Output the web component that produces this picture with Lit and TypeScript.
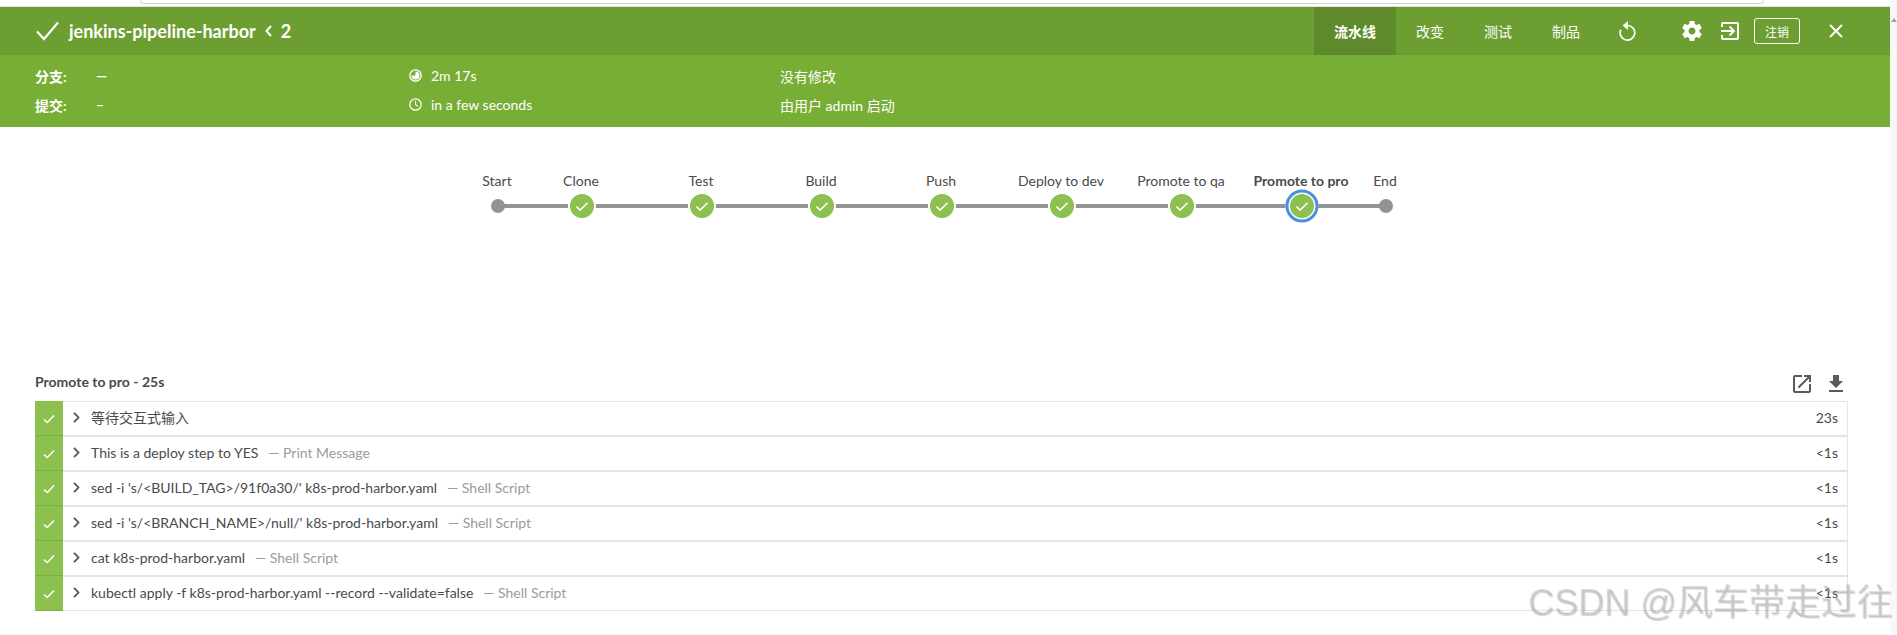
import { LitElement, html, css, svg } from "lit";
import { customElement } from "lit/decorators.js";

const NODES = [
  { x: 28, label: "Start", kind: "end" },
  { x: 112, label: "Clone", kind: "ok" },
  { x: 232, label: "Test", kind: "ok" },
  { x: 352, label: "Build", kind: "ok" },
  { x: 472, label: "Push", kind: "ok" },
  { x: 592, label: "Deploy to dev", kind: "ok" },
  { x: 712, label: "Promote to qa", kind: "ok" },
  { x: 832, label: "Promote to pro", kind: "sel" },
  { x: 916, label: "End", kind: "end" },
];

const ROWS = [
  { t: "等待交互式输入", d: "", time: "23s" },
  { t: "This is a deploy step to YES", d: "— Print Message", time: "<1s" },
  { t: "sed -i 's/<BUILD_TAG>/91f0a30/' k8s-prod-harbor.yaml", d: "— Shell Script", time: "<1s" },
  { t: "sed -i 's/<BRANCH_NAME>/null/' k8s-prod-harbor.yaml", d: "— Shell Script", time: "<1s" },
  { t: "cat k8s-prod-harbor.yaml", d: "— Shell Script", time: "<1s" },
  { t: "kubectl apply -f k8s-prod-harbor.yaml --record --validate=false", d: "— Shell Script", time: "<1s" },
];

@customElement("app-root")
export class AppRoot extends LitElement {
  static styles = css`
    :host {
      display: block;
      position: relative;
      height: 635px;
      overflow: hidden;
      background: #fff;
      font-family: Lato, "Noto Sans CJK SC", sans-serif;
      font-size: 14px;
      color: #4a4a4a;
    }
    .page { display: flex; height: 635px; }
    .main { width: 1890px; flex: none; }
    .rail {
      width: 7px;
      flex: none;
      background: #f8f8f8;
      display: flex;
      justify-content: center;
      padding-top: 18px;
      box-sizing: border-box;
    }
    .arrow {
      width: 0; height: 0;
      border-left: 3px solid transparent;
      border-right: 3px solid transparent;
      border-bottom: 4px solid #a0a0a0;
    }
    .strip { height: 7px; background: #fff; box-sizing: border-box; box-shadow: inset 0 -1px 0 #e4e4e4; }
    .strip div {
      height: 3px;
      margin: 0 126px 0 140px;
      border: 1px solid #cfcfcf;
      border-top: 0;
      border-radius: 0 0 6px 6px;
    }
    .head {
      height: 48px;
      background: #6d9e31;
      color: #fff;
      display: flex;
      align-items: center;
      padding-left: 36px;
    }
    .title { font-size: 18px; font-weight: 700; margin-left: 10px; }
    .run { display: flex; align-items: center; margin-left: 9px; font-size: 18px; font-weight: 700; gap: 9px; }
    .tabs { display: flex; align-self: stretch; margin-left: auto; }
    .tab { padding: 0 20px; display: flex; align-items: center; font-size: 14px; }
    .tab.on { background: #5f8a2c; font-weight: 700; }
    .reload { margin-left: 19px; }
    .gear { margin-left: 44px; margin-right: -2px; }
    .exit { margin-left: 19px; }
    .logout {
      margin-left: 15px;
      width: 46px;
      height: 26px;
      box-sizing: border-box;
      border: 1px solid #fff;
      border-radius: 3px;
      font-size: 12px;
      display: flex;
      align-items: center;
      justify-content: center;
    }
    .close { margin-left: 29px; margin-right: 47px; }
    .head svg { display: block; flex: none; }
    .meta {
      height: 72px;
      box-sizing: border-box;
      background: #78ae36;
      color: #fff;
      padding: 6px 0 0 35px;
      display: grid;
      grid-template-columns: 62px 312px 371px 1fr;
      grid-auto-rows: 29px;
      align-items: center;
      font-size: 14px;
    }
    .meta b { font-weight: 700; }
    .meta .dash { font-weight: 700; margin-left: -1px; }
    .cell { display: flex; align-items: center; gap: 9px; }
    .graph { display: block; margin: 40px 0 0 470px; }
    .graph text {
      font-family: Lato, "Noto Sans CJK SC", sans-serif;
      font-size: 14px;
      fill: #4a4a4a;
      text-anchor: middle;
    }
    .graph text.sel { font-weight: 700; }
    .details { margin-top: 145px; padding: 0 42px 0 35px; }
    .dhead {
      height: 29px;
      display: flex;
      align-items: flex-start;
      justify-content: space-between;
    }
    .dhead b { font-size: 14px; font-weight: 700; line-height: 20px; }
    .tools { display: flex; gap: 10px; }
    .tools svg { display: block; }
    .rowline {
      display: flex;
      align-items: center;
      height: 35px;
      box-sizing: border-box;
      border: 1px solid #e4e4e4;
      border-left: 0;
      padding-bottom: 3px;
    }
    .bar {
      width: 28px;
      height: 35px;
      margin: -1px 0 -4px;
      flex: none;
      background: #8cc04f;
      box-shadow: inset 0 -1px 0 #7fb03f;
      display: flex;
      align-items: center;
      justify-content: center;
    }
    .chev { margin-left: 10px; flex: none; display: block; }
    .label { margin-left: 11px; white-space: pre; }
    .desc { margin-left: 10px; color: #9b9b9b; white-space: pre; }
    .time { margin-left: auto; margin-right: 9px; }
    .mark {
      position: absolute;
      left: 1528px;
      top: 580px;
      font-family: "Liberation Sans", "Noto Sans CJK SC", sans-serif;
      font-size: 36px;
      line-height: 46px;
      white-space: pre;
      color: rgba(170, 170, 170, 0.36);
      text-shadow: 1px 1px 1px rgba(120, 120, 120, 0.3);
    }
  `;

  private node(n: { x: number; label: string; kind: string }) {
    const y = 39;
    const text = svg`<text class=${n.kind === "sel" ? "sel" : ""} x=${n.x - 1} y="19">${n.label}</text>`;
    if (n.kind === "end") {
      return svg`${text}<circle cx=${n.x} cy=${y} r="7" fill="#949393"></circle>`;
    }
    const ring =
      n.kind === "sel"
        ? svg`<circle cx=${n.x} cy=${y} r="16.5" fill="#fff"></circle><circle cx=${n.x} cy=${y} r="15" fill="none" stroke="#4a90e2" stroke-width="3"></circle>`
        : svg`<circle cx=${n.x} cy=${y} r="14" fill="#fff"></circle>`;
    return svg`${text}${ring}<circle cx=${n.x} cy=${y} r="12" fill="#8cc04f"></circle>
      <path d="M${n.x - 5.5} ${y + 0.5}l3.6 3.6 7.4-7.4" fill="none" stroke="#fff" stroke-width="1.5"></path>`;
  }

  render() {
    return html`
      <div class="page">
        <div class="main">
          <div class="strip"><div></div></div>
          <div class="head">
            <svg width="23" height="20" viewBox="0 0 23 20">
              <path d="M1 10.5l7 7.5L22 1.5" fill="none" stroke="#fff" stroke-width="2.2"></path>
            </svg>
            <span class="title">jenkins-pipeline-harbor</span>
            <span class="run">
              <svg width="7" height="12" viewBox="0 0 7 12"><path d="M6 1L1.5 6 6 11" fill="none" stroke="#fff" stroke-width="2"></path></svg>
              <span>2</span>
            </span>
            <div class="tabs">
              <div class="tab on">流水线</div>
              <div class="tab">改变</div>
              <div class="tab">测试</div>
              <div class="tab">制品</div>
            </div>
            <svg class="reload" width="17" height="20" viewBox="0 0 17 20">
              <path d="M8.5 4.5a7.3 7.3 0 1 1-6.6 4.1" fill="none" stroke="#fff" stroke-width="1.7"></path>
              <path d="M9 0L3.6 4.5 9 9z" fill="#fff"></path>
            </svg>
            <svg class="gear" width="24" height="24" viewBox="0 0 24 24">
              <path fill="#fff" d="M19.43 12.98c.04-.32.07-.64.07-.98s-.03-.66-.07-.98l2.11-1.65c.19-.15.24-.42.12-.64l-2-3.46c-.12-.22-.39-.3-.61-.22l-2.49 1c-.52-.4-1.08-.73-1.69-.98l-.38-2.65C14.46 2.18 14.25 2 14 2h-4c-.25 0-.46.18-.49.42l-.38 2.65c-.61.25-1.17.59-1.69.98l-2.49-1c-.23-.09-.49 0-.61.22l-2 3.46c-.13.22-.07.49.12.64l2.11 1.65c-.04.32-.07.65-.07.98s.03.66.07.98l-2.11 1.65c-.19.15-.24.42-.12.64l2 3.46c.12.22.39.3.61.22l2.49-1c.52.4 1.08.73 1.69.98l.38 2.65c.03.24.24.42.49.42h4c.25 0 .46-.18.49-.42l.38-2.65c.61-.25 1.17-.59 1.69-.98l2.49 1c.23.09.49 0 .61-.22l2-3.46c.12-.22.07-.49-.12-.64l-2.11-1.65zM12 15.5c-1.93 0-3.5-1.57-3.5-3.5s1.57-3.5 3.5-3.5 3.5 1.57 3.5 3.5-1.57 3.5-3.5 3.5z"></path>
            </svg>
            <svg class="exit" width="18" height="18" viewBox="0 0 18 18">
              <path d="M1 5V2a1 1 0 0 1 1-1h14a1 1 0 0 1 1 1v14a1 1 0 0 1-1 1H2a1 1 0 0 1-1-1v-3" fill="none" stroke="#fff" stroke-width="2"></path>
              <path d="M0 9h12M8.5 4.5L13 9l-4.500 4.500" fill="none" stroke="#fff" stroke-width="2"></path>
            </svg>
            <div class="logout">注销</div>
            <svg class="close" width="14" height="14" viewBox="0 0 14 14">
              <path d="M1 1l12 12M13 1L1 13" fill="none" stroke="#fff" stroke-width="2"></path>
            </svg>
          </div>
          <div class="meta">
            <b>分支:</b><span class="dash">—</span>
            <div class="cell">
              <svg width="13" height="13" viewBox="0 0 13 13">
                <circle cx="6.500" cy="6.500" r="5.700" fill="none" stroke="#fff" stroke-width="1.300"></circle>
                <path d="M6.500 2.500a4 4 0 1 1-4 4L6.500 6.500z" fill="#fff"></path>
              </svg>
              <span>2m 17s</span>
            </div>
            <span>没有修改</span>
            <b>提交:</b><span class="dash">–</span>
            <div class="cell">
              <svg width="13" height="13" viewBox="0 0 13 13">
                <circle cx="6.500" cy="6.500" r="5.700" fill="none" stroke="#fff" stroke-width="1.200"></circle>
                <path d="M6.500 3v3.700l2.500 1.600" fill="none" stroke="#fff" stroke-width="1.100"></path>
              </svg>
              <span>in a few seconds</span>
            </div>
            <span>由用户 admin 启动</span>
          </div>
          <svg class="graph" width="940" height="60" viewBox="0 0 940 60">
            <line x1="28" y1="39" x2="916" y2="39" stroke="#949393" stroke-width="4"></line>
            ${NODES.map((n) => this.node(n))}
          </svg>
          <div class="details">
            <div class="dhead">
              <b>Promote to pro - 25s</b>
              <div class="tools">
                <svg width="24" height="24" viewBox="0 0 24 24"><path fill="#5a5a5a" d="M19 19H5V5h7V3H5a2 2 0 0 0-2 2v14a2 2 0 0 0 2 2h14c1.100 0 2-.9 2-2v-7h-2v7zM14 3v2h3.590l-9.830 9.830 1.410 1.410L19 6.410V10h2V3h-7z"></path></svg>
                <svg width="24" height="24" viewBox="0 0 24 24"><path fill="#5a5a5a" d="M19 9h-4V3H9v6H5l7 7 7-7zM5 18v2h14v-2H5z"></path></svg>
              </div>
            </div>
            ${ROWS.map(
              (r) => html`
                <div class="rowline">
                  <div class="bar">
                    <svg width="12" height="10" viewBox="0 0 12 10"><path d="M1 5.500l3.300 3L11 1.500" fill="none" stroke="#fff" stroke-width="1.500"></path></svg>
                  </div>
                  <svg class="chev" width="7" height="11" viewBox="0 0 7 11"><path d="M1 .8l4.500 4.700L1 10.200" fill="none" stroke="#555" stroke-width="1.800"></path></svg>
                  <span class="label">${r.t}</span>
                  ${r.d ? html`<span class="desc">${r.d}</span>` : ""}
                  <span class="time">${r.time}</span>
                </div>
              `
            )}
          </div>
        </div>
        <div class="rail"><div class="arrow"></div></div>
      </div>
      <div class="mark">CSDN @风车带走过往</div>
    `;
  }
}
